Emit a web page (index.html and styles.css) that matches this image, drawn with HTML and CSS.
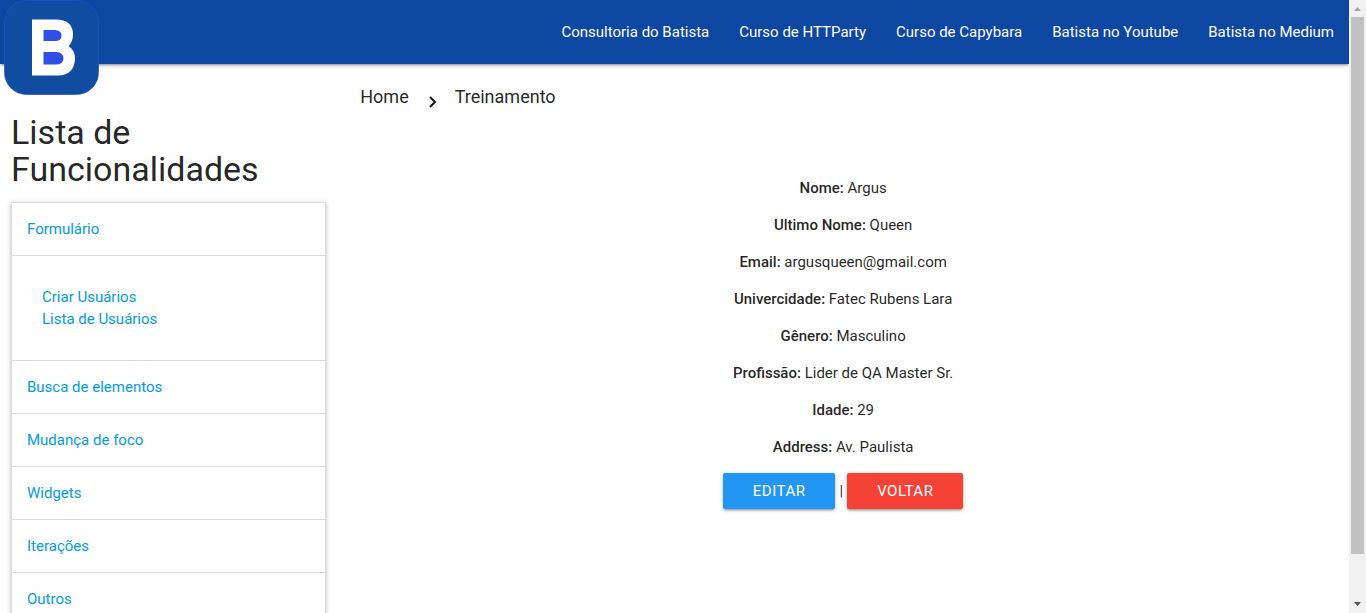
FILE: index.html
```html
<!DOCTYPE html>
<html lang="pt-BR">
<head>
<meta charset="utf-8">
<title>Treinamento</title>
<link rel="stylesheet" href="styles.css">
</head>
<body>
<div class="page">
  <header class="navbar">
    <a class="brand" href="#" aria-label="Batista">
      <svg class="logo" viewBox="0 0 96 96" aria-hidden="true">
        <rect x="0.5" y="0.5" width="94" height="94" rx="22" fill="#104c9f" stroke="#2450d0" stroke-opacity=".7"/>
        <path d="M28 19.500H52Q68.500 19.500 69 34Q69 42 64.500 46Q71 50 71 58.500Q70.500 75 54 75.500H28Z" fill="#fff"/>
        <path d="M39.500 30H51Q57.500 30.500 57.500 35.500Q57.500 41 51 41H39.500ZM39.500 52H52Q59.500 52.500 59.500 58.500Q59 64.500 52 64.500H39.500Z" fill="#3050e4"/>
      </svg>
    </a>
    <nav class="nav-links">
      <a href="#">Consultoria do Batista</a>
      <a href="#">Curso de HTTParty</a>
      <a href="#">Curso de Capybara</a>
      <a href="#">Batista no Youtube</a>
      <a href="#">Batista no Medium</a>
    </nav>
  </header>
  <div class="row">
    <aside class="sidebar">
      <h4 class="sidebar-title">Lista de Funcionalidades</h4>
      <ul class="collapsible">
        <li><a class="item" href="#">Formulário</a>
          <div class="submenu">
            <a href="#">Criar Usuários</a>
            <a href="#">Lista de Usuários</a>
          </div>
        </li>
        <li><a class="item" href="#">Busca de elementos</a></li>
        <li><a class="item" href="#">Mudança de foco</a></li>
        <li><a class="item" href="#">Widgets</a></li>
        <li><a class="item" href="#">Iterações</a></li>
        <li><a class="item" href="#">Outros</a></li>
      </ul>
    </aside>
    <main class="content">
      <nav class="breadcrumb" aria-label="Breadcrumb">
        <a href="#">Home</a>
        <svg class="chevron" viewBox="0 0 10 14" aria-hidden="true"><path d="M3 2L8 7L3 12" fill="none" stroke="#111" stroke-width="2"/></svg>
        <a href="#">Treinamento</a>
      </nav>
      <section class="details">
        <p><strong>Nome:</strong> Argus</p>
        <p><strong>Ultimo Nome:</strong> Queen</p>
        <p><strong>Email:</strong> argusqueen@gmail.com</p>
        <p><strong>Univercidade:</strong> Fatec Rubens Lara</p>
        <p><strong>Gênero:</strong> Masculino</p>
        <p><strong>Profissão:</strong> Lider de QA Master Sr.</p>
        <p><strong>Idade:</strong> 29</p>
        <p><strong>Address:</strong> Av. Paulista</p>
        <div class="actions">
          <a class="btn btn-edit" href="#">Editar</a>
          <span>|</span>
          <a class="btn btn-back" href="#">Voltar</a>
        </div>
      </section>
    </main>
  </div>
</div>
<div class="scrollbar" aria-hidden="true">
  <svg class="arrow" viewBox="0 0 17 17"><path d="M5 11L8.500 7L12 11Z" fill="#a3a3a3"/></svg>
  <div class="thumb"></div>
  <svg class="arrow" viewBox="0 0 17 17"><path d="M5 6L8.500 10L12 6Z" fill="#505050"/></svg>
</div>
</body>
</html>
```
FILE: styles.css
```css
* { box-sizing: border-box; }

body {
  display: flex;
  height: 100vh;
  margin: 0;
  overflow: hidden;
  background: #fff;
  color: rgba(0, 0, 0, .87);
  font: 400 15px/22px Roboto, "Liberation Sans", sans-serif;
}

a { color: #039be5; text-decoration: none; }

.page { flex: 1; min-width: 0; overflow: hidden; }

.navbar {
  display: flex;
  justify-content: space-between;
  height: 64px;
  background: #0d47a1;
  box-shadow: 0 2px 2px 0 rgba(0, 0, 0, .14), 0 3px 1px -2px rgba(0, 0, 0, .12), 0 1px 5px 0 rgba(0, 0, 0, .2);
}

.brand { padding-left: 4px; }
.logo { display: block; width: 96px; height: 96px; }

.nav-links { display: flex; line-height: 64px; }
.nav-links a { padding: 0 15px; color: #fff; }

.row { display: flex; }

.sidebar { width: 25%; padding: 50px 11px 0; }

.sidebar-title {
  margin: 0 0 14px;
  font-size: 34px;
  font-weight: 400;
  line-height: 37px;
}

.collapsible {
  margin: 0;
  padding: 0;
  border: 1px solid #ddd;
  border-bottom: 0;
  list-style: none;
  box-shadow: 0 2px 2px 0 rgba(0, 0, 0, .14), 0 3px 1px -2px rgba(0, 0, 0, .12), 0 1px 5px 0 rgba(0, 0, 0, .2);
}

.item {
  display: block;
  padding: 15px;
  border-bottom: 1px solid #ddd;
}

.submenu {
  display: flex;
  flex-direction: column;
  padding: 30px;
  border-bottom: 1px solid #ddd;
}

.content { flex: 1; padding: 20px 11px 0; }

.breadcrumb {
  display: flex;
  align-items: center;
  gap: 18px;
  padding-left: 12px;
  font-size: 18px;
  line-height: 26px;
}
.breadcrumb a { color: rgba(0, 0, 0, .87); }
.chevron { width: 10px; height: 14px; margin-top: 10px; }

.details { padding-top: 67px; text-align: center; }
.details p { margin: 0 0 15px; }
.details strong { font-weight: 500; }

.actions {
  display: flex;
  justify-content: center;
  gap: 4px;
  line-height: 36px;
}

.btn {
  padding: 0 30px;
  border-radius: 2px;
  color: #fff;
  letter-spacing: .5px;
  text-transform: uppercase;
  box-shadow: 0 2px 2px 0 rgba(0, 0, 0, .14), 0 3px 1px -2px rgba(0, 0, 0, .12), 0 1px 5px 0 rgba(0, 0, 0, .2);
}
.btn-edit { background: #2196f3; }
.btn-back { background: #f44336; }

.scrollbar {
  display: flex;
  flex-direction: column;
  width: 17px;
  background: #f1f1f1;
}
.arrow { width: 17px; height: 17px; }
.thumb { height: 87.6%; margin: 0 2px; background: #c1c1c1; }
.arrow:last-child { margin-top: auto; }
```
